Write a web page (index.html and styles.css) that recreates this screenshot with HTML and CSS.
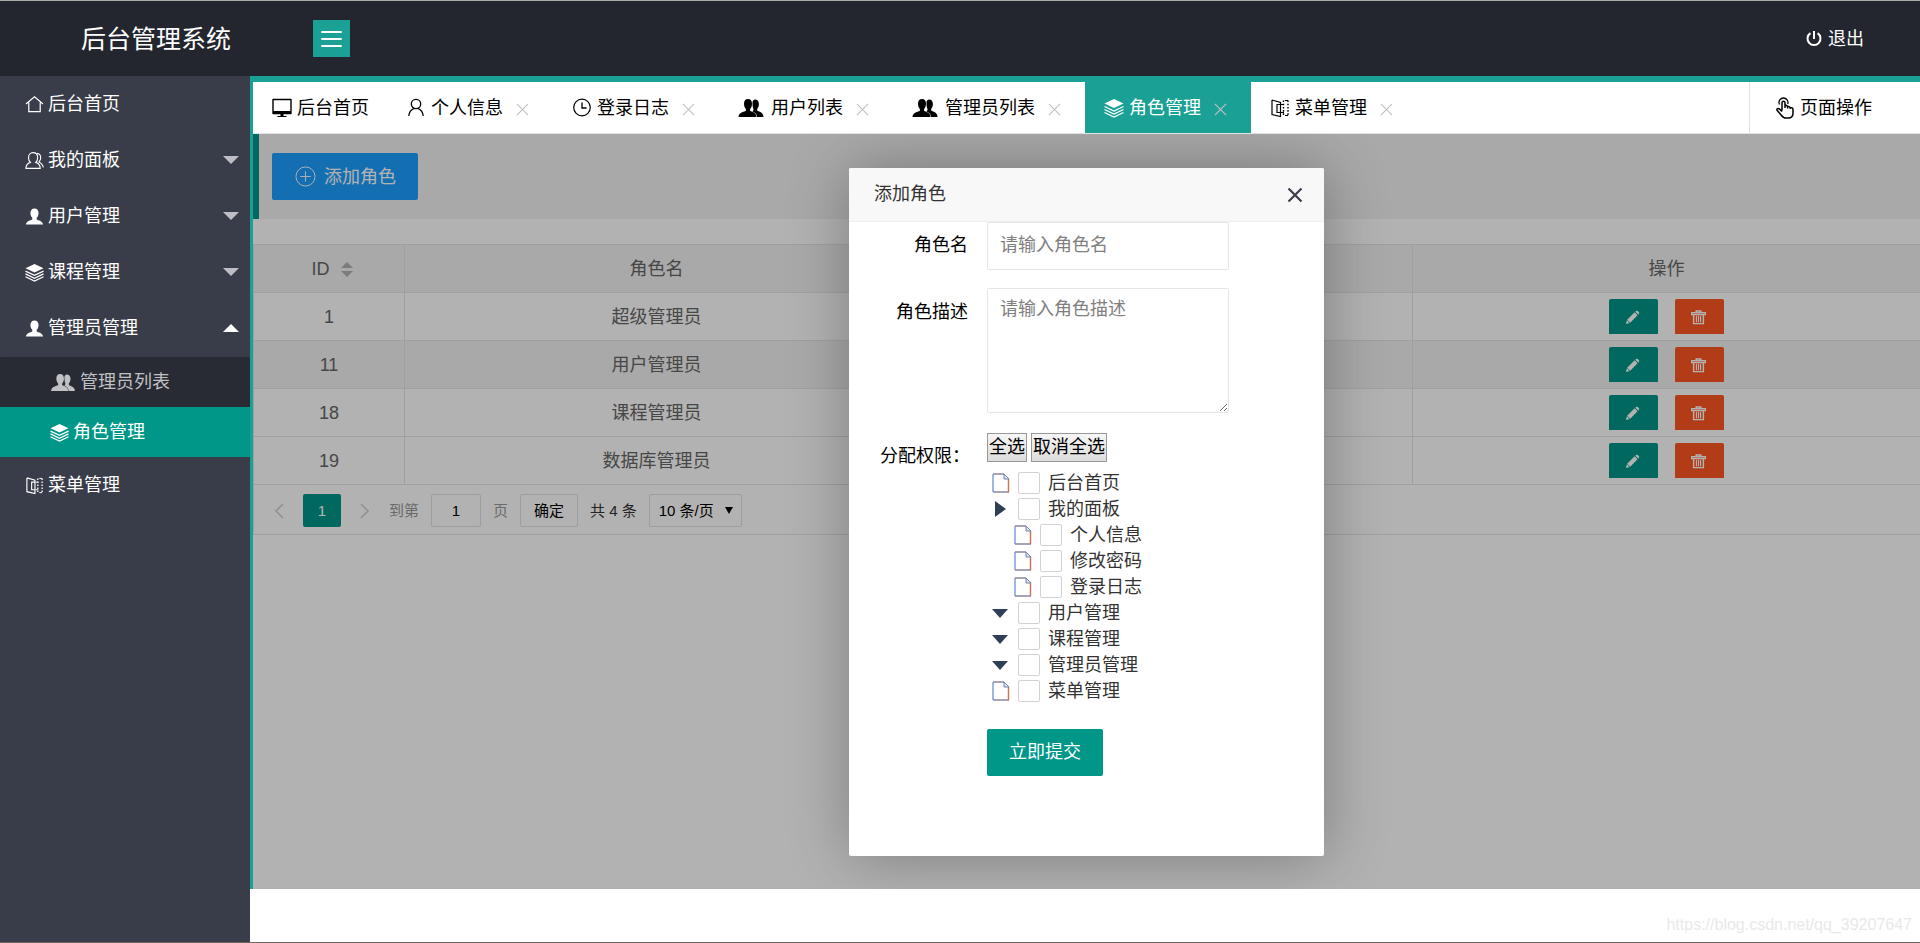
FILE: index.html
```
<!DOCTYPE html>
<html lang="zh-CN">
<head>
<meta charset="utf-8">
<title>后台管理系统</title>
<link rel="stylesheet" href="styles.css">
</head>
<body>
<svg class="sprite" aria-hidden="true">
  <symbol id="home" viewBox="0 0 20 20"><path d="M1 9.500 10 2l9 7.500M4 8v9.500h12V8" fill="none" stroke="currentColor" stroke-width="1.300"/></symbol>
  <symbol id="people" viewBox="0 0 20 20"><path d="M1 18.300c0-3.300 1.500-5.300 4.700-6.300C4 10.500 3.700 8.500 3.700 7c0-3 1.800-5.300 4.800-5.300s4.800 2.300 4.800 5.300c0 1.500-.3 3.500-2 5 3.200 1 4.700 3 4.700 6.300zM12.500 2.500c2.700.2 4 2.300 4 4.700 0 1.800-.8 3.200-1.800 4.300 2.800 1.500 4.300 3.300 4.500 5.800" fill="none" stroke="currentColor" stroke-width="1.200"/></symbol>
  <symbol id="user-solid" viewBox="0 0 20 20"><path d="M10 1.500c2.800 0 4.300 2 4.300 4.700 0 2.300-.8 4-2 5.200v1.700c1.600 1 6.700 1.600 6.700 5.400H1c0-3.800 5.100-4.400 6.700-5.400v-1.700c-1.200-1.200-2-2.900-2-5.200 0-2.700 1.500-4.700 4.300-4.700z" fill="currentColor"/></symbol>
  <symbol id="layers" viewBox="0 0 20 20"><path d="M10 1 19.500 5.500 10 10 .5 5.500z" fill="currentColor"/><path d="M.5 8.500 10 13l9.500-4.500M.5 11.500 10 16l9.500-4.500M.5 14.500 10 19l9.500-4.500" fill="none" stroke="currentColor" stroke-width="1.300"/></symbol>
  <symbol id="group" viewBox="0 0 26 20"><path d="M17 1.500c2.600 0 3.900 2 3.900 4.500 0 2-.6 3.600-1.700 4.900v1.600c1.300 1.200 6.300 1.500 6.300 6.500H19c-.2-3-1.800-4.500-4.500-5.600l1-1.500v-1.200c-1-1.300-1-6-1-6.800.4-1.400 1.200-2.400 2.500-2.400z" fill="currentColor"/><path d="M10 1c2.700 0 4 2 4 4.700 0 2.200-.7 4-1.900 5.300v1.700c1.600 1.200 6.400 1.500 6.400 6.300H.5c0-4.800 5.800-5.100 7.400-6.300V11C6.700 9.700 6 7.900 6 5.700 6 3 7.300 1 10 1z" fill="currentColor"/></symbol>
  <symbol id="book" viewBox="0 0 20 20"><path d="M2 2v14.500l8.500 2v-14L2 2M10 6.500H7v8h3" fill="none" stroke="currentColor" stroke-width="1.200"/><path d="M13.500 2.500v16M18 2.500v16" fill="none" stroke="currentColor" stroke-width="1.400" stroke-dasharray="1.600 1.600"/><path d="M11 6.500h3M11 14.500h3M15 2.500h3M15 17.500h3" fill="none" stroke="currentColor" stroke-width="1"/></symbol>
  <symbol id="monitor" viewBox="0 0 20 20"><path d="M1 1.500h18v14H1z" fill="none" stroke="currentColor" stroke-width="1.400" stroke-linejoin="round"/><path d="M1 13h18v3H1zM8.500 16h3v2h3v1h-9v-1h3z" fill="currentColor"/></symbol>
  <symbol id="person" viewBox="0 0 20 20"><circle cx="10" cy="6" r="4.700" fill="none" stroke="currentColor" stroke-width="1.300"/><path d="M2.800 18c.2-3.500 2.500-6.500 5.200-7.700M17.200 18c-.2-3.500-2.500-6.500-5.200-7.700" fill="none" stroke="currentColor" stroke-width="1.300"/></symbol>
  <symbol id="clock" viewBox="0 0 20 20"><circle cx="10" cy="9.500" r="8.300" fill="none" stroke="currentColor" stroke-width="1.200"/><path d="M10 4.500V10h4.500" fill="none" stroke="currentColor" stroke-width="1.300"/></symbol>
  <symbol id="hand" viewBox="0 0 20 22"><path d="M7 13.500V5.800c0-2 3-2 3 0V11M10 8.800c.8-.8 2.500-.5 2.600.8V11.500M12.600 10c.8-.8 2.500-.4 2.600.8V12M15.200 11c1.200-.6 2.800-.1 2.800 1.300V16c0 3.500-2.200 5-4.700 5h-2c-2.500 0-4-1.200-5.200-3L2 13.200c-.6-1.600 1.200-2.300 2.300-1.300L7 14.500" fill="none" stroke="currentColor" stroke-width="1.500" stroke-linejoin="round"/><path d="M4.500 7.500C3 4 5.500 1 8.500 1s5.300 2.800 4.200 6" fill="none" stroke="currentColor" stroke-width="1.300"/></symbol>
  <symbol id="power" viewBox="0 0 20 20"><path d="M6 3.500a7.200 7.200 0 1 0 8 0M10 1v9" fill="none" stroke="currentColor" stroke-width="2.200"/></symbol>
  <symbol id="plus" viewBox="0 0 22 22"><circle cx="11" cy="11" r="10" fill="none" stroke="currentColor" stroke-width="1"/><path d="M5.500 11h11M11 5.500v11" stroke="currentColor" stroke-width="1"/></symbol>
  <symbol id="pencil" viewBox="0 0 16 16"><path d="M1 15l1-4 2.800 2.800zM2.300 10.500 10.200 2.500l3.200 3.200-7.900 8zM11 1.900l1-1c1.200-.9 3.900 1.600 3 3l-1 1z" fill="currentColor"/></symbol>
  <symbol id="trash" viewBox="0 0 16 16"><path d="M5.500 2V1h5v1M.5 2.800h15v2H.5zM2.800 5v9.500h10.400V5" fill="none" stroke="currentColor" stroke-width="1.500"/><path d="M5.800 6v7M8 6v7M10.200 6v7" stroke="currentColor" stroke-width="1.200"/></symbol>
  <symbol id="close" viewBox="0 0 14 14"><path d="M1 1l12 12M13 1 1 13" fill="none" stroke="currentColor" stroke-width="1.200"/></symbol>
  <symbol id="close-bold" viewBox="0 0 16 16"><path d="M1.500 1.500l13 13M14.500 1.500l-13 13" fill="none" stroke="currentColor" stroke-width="2.200"/></symbol>
  <symbol id="left" viewBox="0 0 10 16"><path d="M9 1 2 8l7 7" fill="none" stroke="currentColor" stroke-width="1.700"/></symbol>
  <symbol id="right" viewBox="0 0 10 16"><path d="M1 1l7 7-7 7" fill="none" stroke="currentColor" stroke-width="1.700"/></symbol>
  <symbol id="file" viewBox="0 0 18 20"><path d="M1 1v18" stroke="#7f9fdc" stroke-width="1.500"/><path d="M1 1h11M1 19h16" stroke="#8a86a0" stroke-width="1.500"/><path d="M16.500 6v13" stroke="#c8755c" stroke-width="1.500"/><path d="M12 1v5h5z" fill="#dde4f2" stroke="#7484a8" stroke-width="1"/></symbol>
  <symbol id="tri-down" viewBox="0 0 16 16"><path d="M0 4h16l-8 9z" fill="currentColor"/></symbol>
  <symbol id="tri-right" viewBox="0 0 16 16"><path d="M3 0v16l11-8z" fill="currentColor"/></symbol>
</svg>

<header class="header">
  <h1 class="brand">后台管理系统</h1>
  <button class="toggle" type="button" aria-label="收起菜单"><span></span><span></span><span></span></button>
  <a class="logout" href="#"><svg class="icon"><use href="#power"/></svg>退出</a>
</header>

<div class="shell">
  <nav class="sidebar">
    <a class="nav-item" href="#"><svg class="icon"><use href="#home"/></svg>后台首页</a>
    <a class="nav-item" href="#"><svg class="icon"><use href="#people"/></svg>我的面板<i class="caret"></i></a>
    <a class="nav-item" href="#"><svg class="icon"><use href="#user-solid"/></svg>用户管理<i class="caret"></i></a>
    <a class="nav-item" href="#"><svg class="icon"><use href="#layers"/></svg>课程管理<i class="caret"></i></a>
    <a class="nav-item" href="#"><svg class="icon"><use href="#user-solid"/></svg>管理员管理<i class="caret open"></i></a>
    <div class="subnav">
      <a class="sub-item" href="#"><svg class="icon wide"><use href="#group"/></svg>管理员列表</a>
      <a class="sub-item current" href="#"><svg class="icon"><use href="#layers"/></svg>角色管理</a>
    </div>
    <a class="nav-item" href="#"><svg class="icon"><use href="#book"/></svg>菜单管理</a>
  </nav>

  <div class="main">
    <div class="body">
      <div class="tabbar">
        <div class="tab home"><svg class="icon"><use href="#monitor"/></svg>后台首页</div>
        <div class="tab"><svg class="icon"><use href="#person"/></svg>个人信息<button class="tab-close" type="button" aria-label="关闭"><svg><use href="#close"/></svg></button></div>
        <div class="tab"><svg class="icon"><use href="#clock"/></svg>登录日志<button class="tab-close" type="button" aria-label="关闭"><svg><use href="#close"/></svg></button></div>
        <div class="tab"><svg class="icon wide"><use href="#group"/></svg>用户列表<button class="tab-close" type="button" aria-label="关闭"><svg><use href="#close"/></svg></button></div>
        <div class="tab"><svg class="icon wide"><use href="#group"/></svg>管理员列表<button class="tab-close" type="button" aria-label="关闭"><svg><use href="#close"/></svg></button></div>
        <div class="tab active"><svg class="icon"><use href="#layers"/></svg>角色管理<button class="tab-close" type="button" aria-label="关闭"><svg><use href="#close"/></svg></button></div>
        <div class="tab"><svg class="icon"><use href="#book"/></svg>菜单管理<button class="tab-close" type="button" aria-label="关闭"><svg><use href="#close"/></svg></button></div>
        <a class="page-ops" href="#"><svg class="icon tall"><use href="#hand"/></svg>页面操作</a>
      </div>

      <div class="page">
        <div class="toolbar"><button class="add" type="button"><svg><use href="#plus"/></svg>添加角色</button></div>
        <table class="grid">
          <colgroup><col class="c-id"><col class="c-name"><col class="c-desc"><col></colgroup>
          <thead><tr><th class="sortable">ID <span class="sort"><i></i><i></i></span></th><th>角色名</th><th></th><th>操作</th></tr></thead>
          <tbody>
            <tr><td>1</td><td>超级管理员</td><td></td><td><div class="acts"><button class="act edit" type="button" aria-label="编辑"><svg><use href="#pencil"/></svg></button><button class="act del" type="button" aria-label="删除"><svg><use href="#trash"/></svg></button></div></td></tr>
            <tr class="hover"><td>11</td><td>用户管理员</td><td></td><td><div class="acts"><button class="act edit" type="button" aria-label="编辑"><svg><use href="#pencil"/></svg></button><button class="act del" type="button" aria-label="删除"><svg><use href="#trash"/></svg></button></div></td></tr>
            <tr><td>18</td><td>课程管理员</td><td></td><td><div class="acts"><button class="act edit" type="button" aria-label="编辑"><svg><use href="#pencil"/></svg></button><button class="act del" type="button" aria-label="删除"><svg><use href="#trash"/></svg></button></div></td></tr>
            <tr><td>19</td><td>数据库管理员</td><td></td><td><div class="acts"><button class="act edit" type="button" aria-label="编辑"><svg><use href="#pencil"/></svg></button><button class="act del" type="button" aria-label="删除"><svg><use href="#trash"/></svg></button></div></td></tr>
          </tbody>
        </table>
        <div class="pager">
          <button class="arrow" type="button" aria-label="上一页"><svg><use href="#left"/></svg></button>
          <span class="num">1</span>
          <button class="arrow next" type="button" aria-label="下一页"><svg><use href="#right"/></svg></button>
          <label class="muted" for="goto">到第</label>
          <input class="goto" id="goto" type="text" value="1">
          <span class="muted">页</span>
          <button class="go" type="button">确定</button>
          <span class="total">共 4 条</span>
          <span class="limit"><select aria-label="每页条数"><option>10 条/页</option></select></span>
        </div>

        <div class="shade">
          <section class="modal" role="dialog" aria-labelledby="dlg-title">
            <div class="modal-head"><h2 id="dlg-title">添加角色</h2><button class="modal-close" type="button" aria-label="关闭"><svg><use href="#close-bold"/></svg></button></div>
            <form class="form">
              <label class="label" for="role-name">角色名</label>
              <input class="field" id="role-name" type="text" placeholder="请输入角色名">
              <label class="label desc" for="role-desc">角色描述</label>
              <textarea class="field area" id="role-desc" placeholder="请输入角色描述"></textarea>
              <span class="label perm">分配权限：</span>
              <div class="perms">
                <div class="picks"><button type="button">全选</button><button type="button">取消全选</button></div>
                <ul class="tree">
                  <li><svg class="file"><use href="#file"/></svg><label><input type="checkbox">后台首页</label></li>
                  <li><svg class="tri"><use href="#tri-right"/></svg><label><input type="checkbox">我的面板</label></li>
                  <li class="child"><svg class="file"><use href="#file"/></svg><label><input type="checkbox">个人信息</label></li>
                  <li class="child"><svg class="file"><use href="#file"/></svg><label><input type="checkbox">修改密码</label></li>
                  <li class="child"><svg class="file"><use href="#file"/></svg><label><input type="checkbox">登录日志</label></li>
                  <li><svg class="tri"><use href="#tri-down"/></svg><label><input type="checkbox">用户管理</label></li>
                  <li><svg class="tri"><use href="#tri-down"/></svg><label><input type="checkbox">课程管理</label></li>
                  <li><svg class="tri"><use href="#tri-down"/></svg><label><input type="checkbox">管理员管理</label></li>
                  <li><svg class="file"><use href="#file"/></svg><label><input type="checkbox">菜单管理</label></li>
                </ul>
              </div>
              <button class="submit" type="submit">立即提交</button>
            </form>
          </section>
        </div>
      </div>
    </div>
    <footer class="footer">https://blog.csdn.net/qq_39207647</footer>
  </div>
</div>
</body>
</html>
```
FILE: styles.css
```
* { box-sizing: border-box; }
body {
  margin: 0;
  min-height: 100vh;
  display: flex;
  flex-direction: column;
  border-top: 1px solid #aaa;
  border-bottom: 1px solid #6f675f;
  background: #fff;
  color: #000;
  font: 18px/24px "Liberation Sans", "Noto Sans CJK SC", sans-serif;
}
button, input, textarea, select { font: inherit; margin: 0; }
button { padding: 0; border: 0; background: none; cursor: pointer; }
a { color: inherit; text-decoration: none; }
svg { display: block; flex: none; }
.sprite { position: absolute; width: 0; height: 0; }
.icon { width: 20px; height: 20px; }
.icon.wide { width: 26px; }
.icon.tall { height: 22px; }

.header {
  display: flex;
  align-items: center;
  height: 75px;
  background: #23262e;
  color: #fff;
}
.brand { width: 313px; margin: 0; padding-left: 81px; font-size: 25px; font-weight: 400; line-height: 36px; }
.toggle {
  display: flex;
  flex-direction: column;
  align-items: center;
  justify-content: center;
  gap: 5px;
  width: 37px;
  height: 37px;
  background: #1aa094;
}
.toggle span { width: 21px; height: 2px; border-radius: 1px; background: #fff; }
.logout { display: flex; align-items: center; gap: 5px; margin-left: auto; padding-right: 56px; }
.logout .icon { width: 18px; height: 18px; }

.shell { flex: 1; display: flex; }
.sidebar { width: 250px; flex: none; background: #393d49; color: #fff; }
.nav-item { display: flex; align-items: center; gap: 4px; height: 56px; padding: 0 11px 0 25px; }
.nav-item .icon, .sub-item .icon { width: 19px; height: 19px; }
.caret { margin-left: auto; border: 8px solid transparent; border-top-color: #bdbec2; border-bottom-width: 0; }
.caret.open { border-top-width: 0; border-bottom: 8px solid #fff; }
.subnav { margin-top: 1px; border-radius: 2px; background: #282b33; }
.sub-item { display: flex; align-items: center; gap: 4px; height: 50px; padding-left: 50px; color: #c0c1c4; }
.sub-item .icon.wide { width: 26px; }
.sub-item.current { background: #009688; color: #fff; }

.main { flex: 1; min-width: 0; display: flex; flex-direction: column; }
.body {
  flex: 1;
  display: flex;
  flex-direction: column;
  border-top: 6px solid #1aa094;
  border-left: 3px solid #1aa094;
}
.tabbar { display: flex; height: 52px; border-bottom: 1px solid #e2e2e2; background: #fff; }
.tab { display: flex; align-items: center; gap: 5px; padding: 0 24px 0 19px; white-space: nowrap; }
.tab.home { padding-right: 18px; }
.tab .wide { margin-right: 2px; }
.tab.active { background: #1aa094; color: #fff; }
.tab-close { margin-left: 8px; padding-top: 4px; color: #c2c2c2; }
.tab-close svg { width: 13px; height: 13px; }
.page-ops {
  display: flex;
  align-items: center;
  gap: 5px;
  width: 171px;
  margin-left: auto;
  padding-left: 25px;
  border-left: 1px solid #e2e2e2;
}

.page { position: relative; flex: 1; color: #666; }
.toolbar { padding: 19px 13px; border-left: 6px solid #009688; background: #f2f2f2; }
.add {
  display: flex;
  align-items: center;
  gap: 8px;
  height: 47px;
  padding: 0 22px 0 23px;
  border-radius: 2px;
  background: #1e9fff;
  color: #fff;
}
.add svg { width: 21px; height: 21px; }

.grid { width: 100%; margin-top: 25px; border-collapse: collapse; table-layout: fixed; }
.c-id { width: 151px; }
.c-name, .c-desc { width: 504px; }
.grid th, .grid td { height: 48px; padding: 0; border: 1px solid #e6e6e6; font-weight: 400; text-align: center; }
.grid th:last-child, .grid td:last-child { border-right: 0; }
.grid .sortable { padding-left: 6px; }
.grid thead, .grid .hover { background: #f2f2f2; }
.sort { display: inline-flex; flex-direction: column; gap: 3px; margin-left: 6px; vertical-align: middle; }
.sort i { border: 6px solid transparent; border-top: 0 solid transparent; border-bottom-color: #b2b2b2; }
.sort i + i { border-top: 6px solid #b2b2b2; border-bottom: 0; }
.acts { display: flex; justify-content: center; gap: 17px; }
.act { display: flex; align-items: center; justify-content: center; width: 49px; height: 35px; padding: 2px 3px 0 0; border-radius: 2px 2px 0 0; color: #fff; }
.act svg { width: 15px; height: 15px; }
.edit { background: #009688; }
.del { background: #ff5722; }

.pager {
  display: flex;
  align-items: center;
  gap: 12px;
  padding: 9px 12px 7px 20px;
  border-bottom: 1px solid #e6e6e6;
  border-left: 1px solid #e6e6e6;
  font-size: 15px;
  color: #333;
}
.arrow { width: 17px; color: #d2d2d2; }
.arrow svg { width: 10px; height: 16px; }
.num { width: 38px; height: 33px; border-radius: 2px; background: #009688; color: #fff; line-height: 33px; text-align: center; }
.arrow.next { width: 24px; padding-left: 7px; }
.muted { color: #999; }
.goto, .go, .limit select { height: 33px; border: 1px solid #e2e2e2; border-radius: 2px; background: #fff; color: #000; }
.goto { width: 50px; text-align: center; }
.go { width: 58px; }
.limit { position: relative; }
.limit select { width: 93px; padding: 0 9px; appearance: none; }
.limit::after {
  content: "";
  position: absolute;
  top: 13px;
  right: 9px;
  border: 4px solid transparent;
  border-top: 7px solid #000;
  border-bottom: 0;
}

.shade {
  position: absolute;
  inset: 0;
  display: flex;
  align-items: center;
  justify-content: center;
  overflow: hidden;
  background: rgba(0, 0, 0, .3);
}
.modal {
  width: 475px;
  padding-bottom: 80px;
  border-radius: 2px;
  background: #fff;
  box-shadow: 1px 1px 62px rgba(0, 0, 0, .3);
  color: #333;
}
.modal-head {
  display: flex;
  align-items: center;
  justify-content: space-between;
  height: 54px;
  padding: 0 21px 0 25px;
  border-bottom: 1px solid #eee;
  border-radius: 2px 2px 0 0;
  background: #f8f8f8;
}
.modal-head h2 { margin: 0; font-size: 18px; font-weight: 400; }
.modal-close { padding-top: 2px; color: #3d3c4b; }
.modal-close svg { width: 16px; height: 16px; }
.form { display: grid; grid-template-columns: 119px 242px; column-gap: 19px; align-items: start; }
.label { padding-top: 11px; color: #000; text-align: right; }
.label.perm { text-align: left; padding-left: 31px; white-space: nowrap; }
.field { width: 100%; height: 48px; padding: 8px 12px; border: 1px solid #e6e6e6; border-radius: 2px; background: #fff; color: #333; }
.field::placeholder { color: #808080; }
.area { display: block; height: 125px; margin-top: 18px; resize: vertical; }
.desc { margin-top: 19px; }
.perm, .perms { margin-top: 20px; }
.picks { display: flex; gap: 4px; }
.picks button { height: 29px; padding: 0 1px; border: 1px solid #999; background: linear-gradient(#f6f6f6, #dcdcdc); color: #000; }
.tree { margin: 8px 0 0; padding: 0; list-style: none; }
.tree li { display: flex; align-items: center; height: 26px; padding-left: 5px; }
.tree .child { padding-left: 27px; }
.tree svg { color: #2f4056; }
.file { width: 18px; height: 20px; margin-right: 8px; }
.tri { width: 16px; height: 16px; margin-right: 10px; }
.tree label { display: flex; align-items: center; gap: 8px; }
.tree input { appearance: none; width: 22px; height: 22px; border: 1px solid #d2d2d2; border-radius: 2px; background: #fff; }
.submit { grid-column: 2; justify-self: start; height: 47px; margin-top: 25px; padding: 0 22px; border-radius: 2px; background: #009688; color: #fff; }

.footer { height: 53px; padding: 24px 8px 0; color: #e9e9e9; font-size: 16px; text-align: right; }
```
